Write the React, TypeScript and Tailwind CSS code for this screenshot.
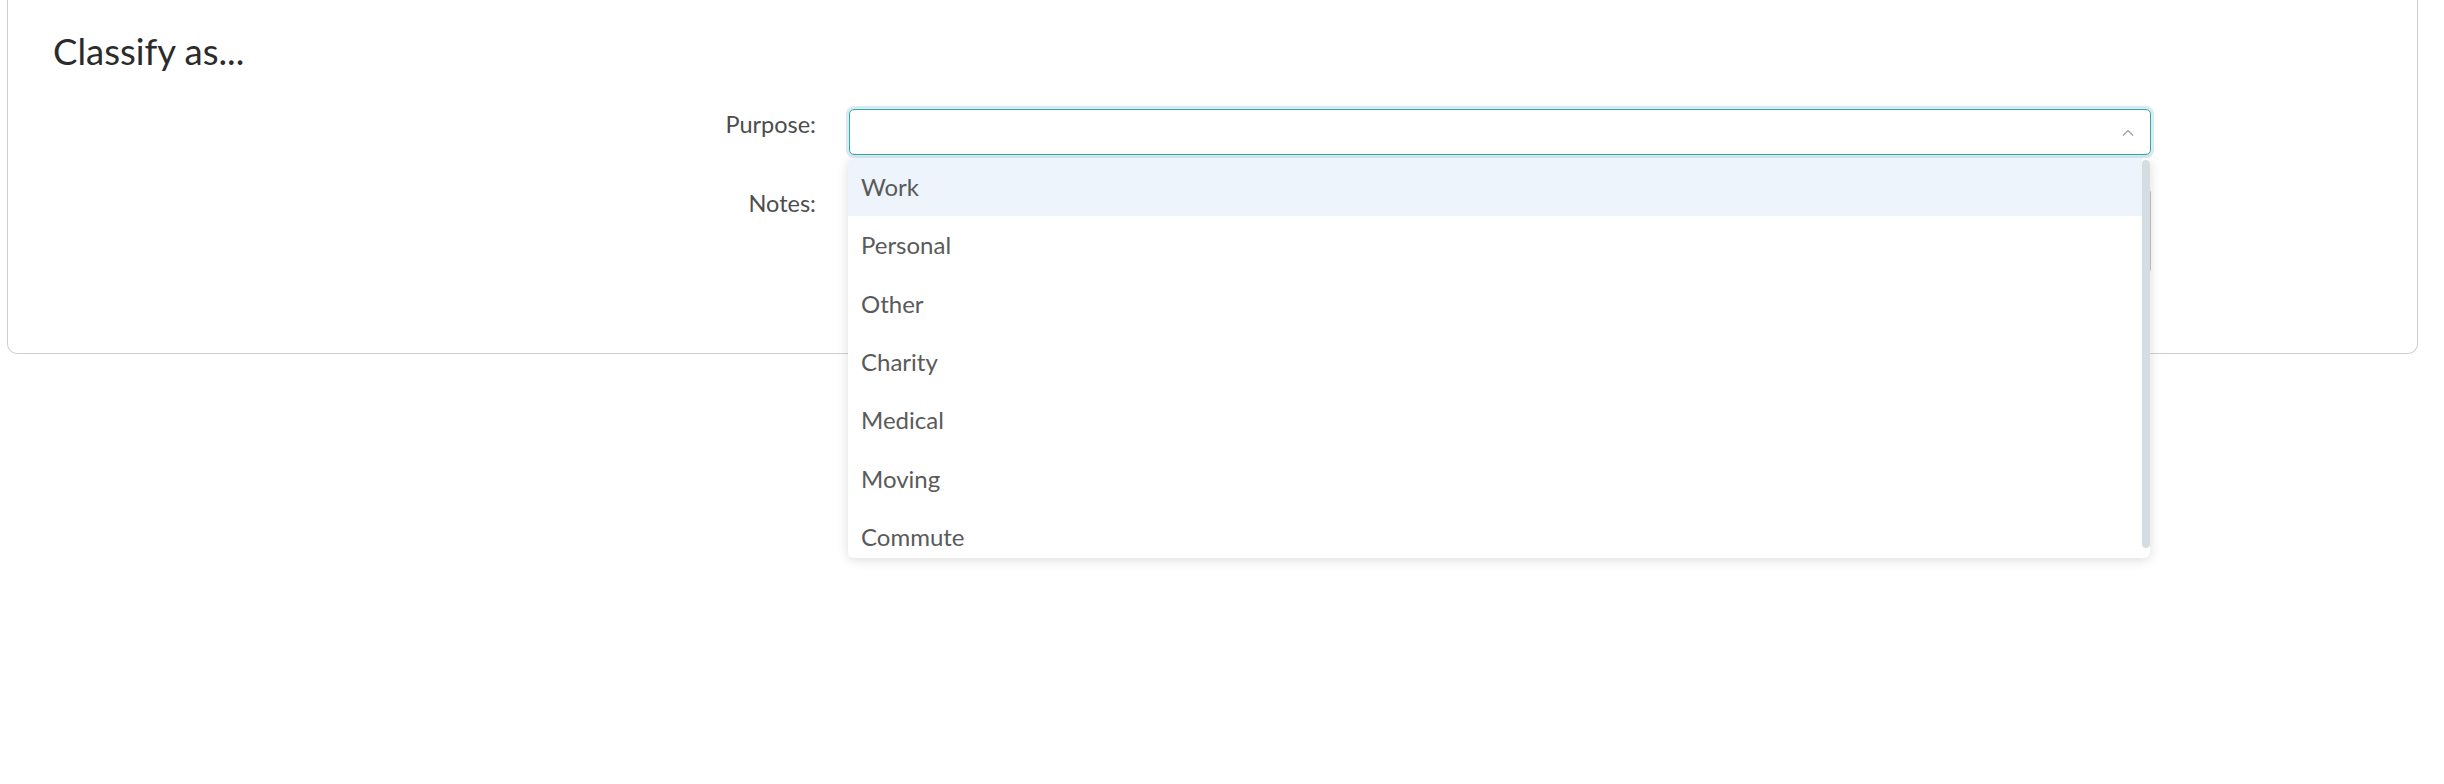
const options = ["Work", "Personal", "Other", "Charity", "Medical", "Moving", "Commute"];

const App = () => {
  return (
    <div className="w-full h-[784px] bg-white font-['Lato','Liberation_Sans',sans-serif]">
      <div className="ml-[7px] mr-[26px] border-x border-b border-[#cfcfcf] rounded-b-[10px] pl-[45px] pt-[28px] pb-[79px]">
        <h2 className="text-[36.5px] leading-[46px] text-[#2b2b2b]">Classify as...</h2>

        <div className="mt-[35px] grid grid-cols-[763px_1302px] gap-x-[33px] gap-y-[33px]">
          <label className="text-right text-[23.5px] leading-[30px] text-[#4d4d4d]">Purpose:</label>
          <div className="relative">
            <div className="h-[46px] rounded-[5px] border border-[#2bb29d] bg-white shadow-[0_0_0_3px_#dbe9f7] flex items-center justify-end pr-[16px]">
              <svg width="12" height="7" viewBox="0 0 12 7" fill="none" stroke="#9a9a9a" strokeWidth="1.2">
                <path d="M1 6.5 6 1.5 11 6.5" />
              </svg>
            </div>

            <div className="absolute left-[-1px] right-[1px] top-full mt-[3px] h-[400px] overflow-hidden rounded-[6px] bg-white shadow-[0_2px_12px_rgba(0,0,0,0.14)] z-10">
              <ul className="pr-[8px]">
                {options.map((opt, i) => (
                  <li
                    key={opt}
                    className={
                      "h-[58.3px] flex items-center pl-[13px] text-[24px] text-[#5a5a5a] " +
                      (i === 0 ? "bg-[#edf4fb]" : "")
                    }
                  >
                    {opt}
                  </li>
                ))}
              </ul>
              <div className="absolute right-0 top-[2px] bottom-[10px] w-[8px] rounded-full bg-[#d4dde0]" />
            </div>
          </div>

          <label className="text-right text-[23.5px] leading-[30px] text-[#4d4d4d]">Notes:</label>
          <textarea className="h-[86px] rounded-[5px] border border-[#c4c4c4] resize-none" />
        </div>
      </div>
    </div>
  );
};

export default App;
